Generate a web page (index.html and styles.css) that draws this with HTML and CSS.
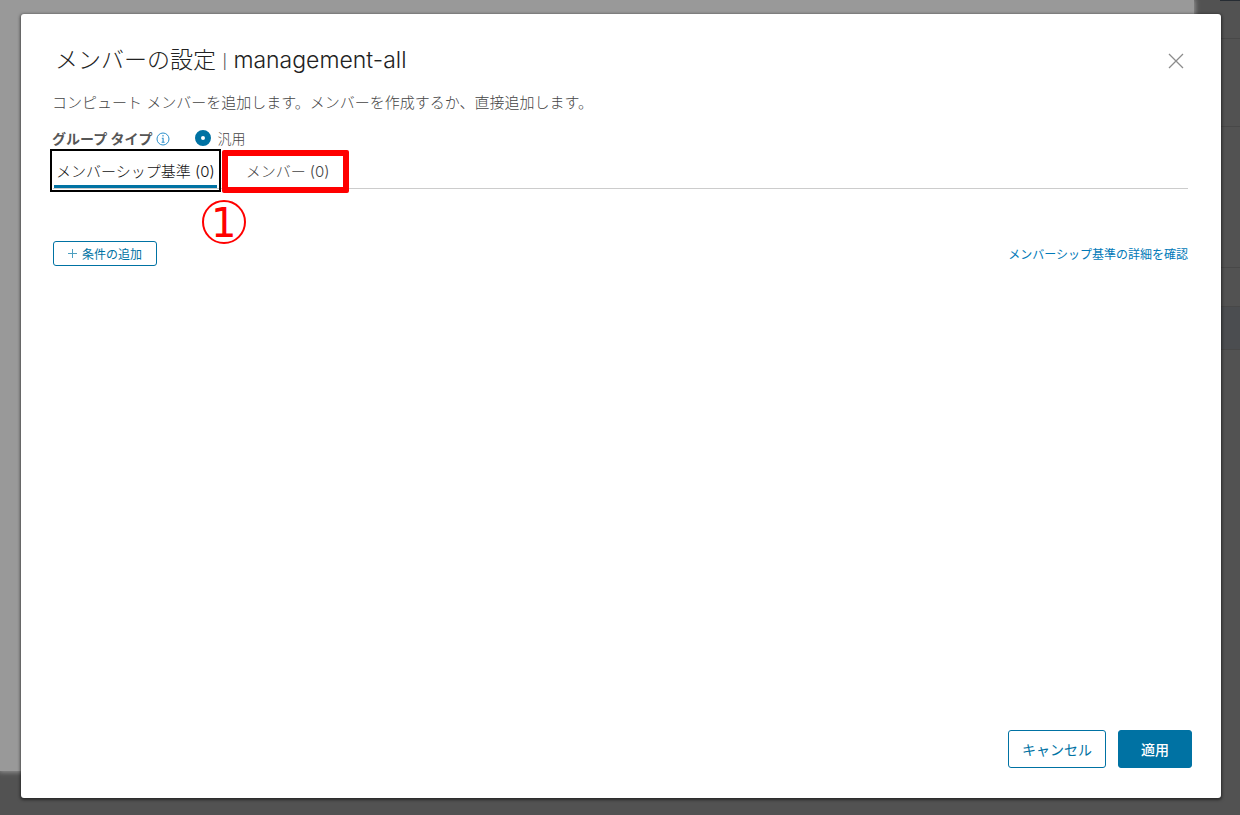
FILE: index.html
```html
<!DOCTYPE html>
<html lang="ja">
<head>
  <meta charset="UTF-8" />
  <meta name="viewport" content="width=device-width, initial-scale=1.0"/>
  <title>メンバーの設定</title>
  <link rel="stylesheet" href="styles.css">
</head>
<body>

  <!-- page behind the dialog -->
  <div class="behind">
    <div class="behind-panel"></div>
    <div class="behind-rows">
      <div class="row head"></div>
      <div class="row first"></div>
      <div class="row second"></div>
      <div class="row third"></div>
      <div class="row small"></div>
      <div class="row selected"></div>
    </div>
  </div>

  <div class="modal" role="dialog" aria-labelledby="modalTitle">
    <div class="modal-header">
      <h1 id="modalTitle">メンバーの設定 <span class="divider">|</span> management-all</h1>
      <button class="close" aria-label="閉じる">
        <svg width="16" height="16" viewBox="0 0 16 16">
          <path d="M1 1 L15 15 M15 1 L1 15" fill="none" stroke="#8c8c8c" stroke-width="1.3"/>
        </svg>
      </button>
    </div>

    <p class="description">コンピュート メンバーを追加します。メンバーを作成するか、直接追加します。</p>

    <div class="group-type">
      <span class="group-label">グループ タイプ</span>
      <svg class="info" width="14" height="14" viewBox="0 0 14 14">
        <circle cx="7" cy="7" r="6" fill="none" stroke="#2b8fcb" stroke-width="1"/>
        <path d="M7 3 V4.6 M5.8 6.2 H7.1 V10.2 M5.6 10.2 H8.6" fill="none" stroke="#2b8fcb" stroke-width="1.1"/>
      </svg>
      <input type="radio" id="generic" name="groupType" checked>
      <label for="generic">汎用</label>
    </div>

    <div class="tabs" role="tablist">
      <button class="tab active" role="tab" aria-selected="true">メンバーシップ基準 (0)</button>
      <div class="tab-wrap">
        <button class="tab" role="tab" aria-selected="false">メンバー (0)</button>
        <div class="mark"><span class="mark-number">1</span></div>
      </div>
    </div>

    <div class="criteria">
      <button class="add">
        <svg width="9" height="9" viewBox="0 0 9 9">
          <path d="M4.5 0 V9 M0 4.5 H9" fill="none" stroke="#4d9fc0" stroke-width="1"/>
        </svg>
        条件の追加
      </button>
      <a href="#">メンバーシップ基準の詳細を確認</a>
    </div>

    <div class="modal-footer">
      <button class="btn">キャンセル</button>
      <button class="btn primary">適用</button>
    </div>
  </div>

</body>
</html>
```

FILE: styles.css
```css
* {
  box-sizing: border-box;
}

body {
  margin: 0;
  min-height: 100vh;
  padding: 14px 19px 17px 21px;
  background: #525252;
  font-family: Inter, "Noto Sans CJK JP", sans-serif;
  font-size: 15px;
  color: #565656;
  display: flex;
}

button {
  font-family: inherit;
  cursor: pointer;
}

/* page behind */
.behind {
  position: absolute;
  inset: 0;
  overflow: hidden;
}

.behind-panel {
  position: absolute;
  inset: 0 46px 44px 0;
  background: #999;
  box-shadow: 0 0 5px 1px #999;
}

.behind-rows {
  position: absolute;
  top: 0;
  right: 0;
  width: 20px;
}

.row {
  border-bottom: 1px solid #484848;
}

.head {
  height: 1px;
  border-color: #262c33;
}

.first {
  height: 38px;
}

.second {
  height: 88px;
}

.third {
  height: 141px;
}

.small {
  height: 39px;
}

.selected {
  height: 43px;
  background: #4b4d50;
}

/* dialog */
.modal {
  position: relative;
  flex: 1;
  display: flex;
  flex-direction: column;
  padding: 30px 33px 30px 32px;
  background: white;
  border-radius: 3px;
  box-shadow: 0 1px 3px 1px rgba(0, 0, 0, 0.5);
}

.modal-header {
  display: flex;
  justify-content: space-between;
  align-items: center;
  height: 32px;
  padding-left: 2px;
}

h1 {
  margin: 0;
  font-size: 23px;
  font-weight: 300;
  line-height: 32px;
  color: #222;
}

.divider {
  font-family: Roboto, sans-serif;
  font-size: 20px;
  color: #555;
}

.close {
  display: flex;
  padding: 5px 4px 3px;
  background: none;
  border: none;
}

.description {
  margin: 17px 0 15px -1px;
  line-height: 20px;
  font-weight: 300;
  color: #444;
}

.group-type {
  display: flex;
  align-items: center;
  height: 20px;
  margin-left: -1px;
  font-size: 14px;
}

.group-label {
  font-weight: bold;
}

.info {
  margin: 2px 25px 0 4px;
}

input[type="radio"] {
  appearance: none;
  width: 16px;
  height: 16px;
  margin: 0 6px 0 0;
  border: 6px solid #0072a3;
  border-radius: 50%;
  background: white;
}

label {
  font-weight: 300;
  color: #444;
}

.tabs {
  display: flex;
  gap: 27px;
  height: 36px;
  margin-top: 5px;
  padding-left: 1px;
  border-bottom: 1px solid #ccc;
}

.tab {
  height: 35px;
  padding: 0 2px;
  background: none;
  border: none;
  font-size: 15px;
  font-weight: 300;
  color: #444;
}

.active {
  color: #111;
  box-shadow: inset 0 -3px #0072a3;
  outline: 2px solid black;
  outline-offset: 2px;
}

.tab-wrap {
  position: relative;
}

.mark {
  position: absolute;
  inset: -3px -17px -5px -22px;
  border: 6px solid red;
  border-radius: 2px;
  pointer-events: none;
}

.mark-number {
  position: absolute;
  top: 44px;
  left: -26px;
  width: 44px;
  height: 44px;
  border: 2px solid red;
  border-radius: 50%;
  font-family: "DejaVu Sans", sans-serif;
  font-size: 40px;
  line-height: 42px;
  text-align: center;
  color: red;
}

.criteria {
  display: flex;
  justify-content: space-between;
  align-items: center;
  margin-top: 52px;
  font-size: 12px;
}

.add {
  display: flex;
  align-items: center;
  gap: 5px;
  height: 25px;
  padding: 0 14px;
  background: white;
  border: 1px solid #0072a3;
  border-radius: 3px;
  font-size: 12px;
  color: #0072a3;
}

a {
  color: #0079b8;
  text-decoration: none;
}

.modal-footer {
  display: flex;
  justify-content: flex-end;
  gap: 12px;
  margin: auto -4px 0 0;
}

.btn {
  height: 38px;
  padding: 0 13px;
  background: white;
  border: 1px solid #0072a3;
  border-radius: 3px;
  font-size: 14px;
  color: #0072a3;
}

.primary {
  padding: 0 22px;
  background: #0072a3;
  font-weight: 500;
  color: white;
}
```
